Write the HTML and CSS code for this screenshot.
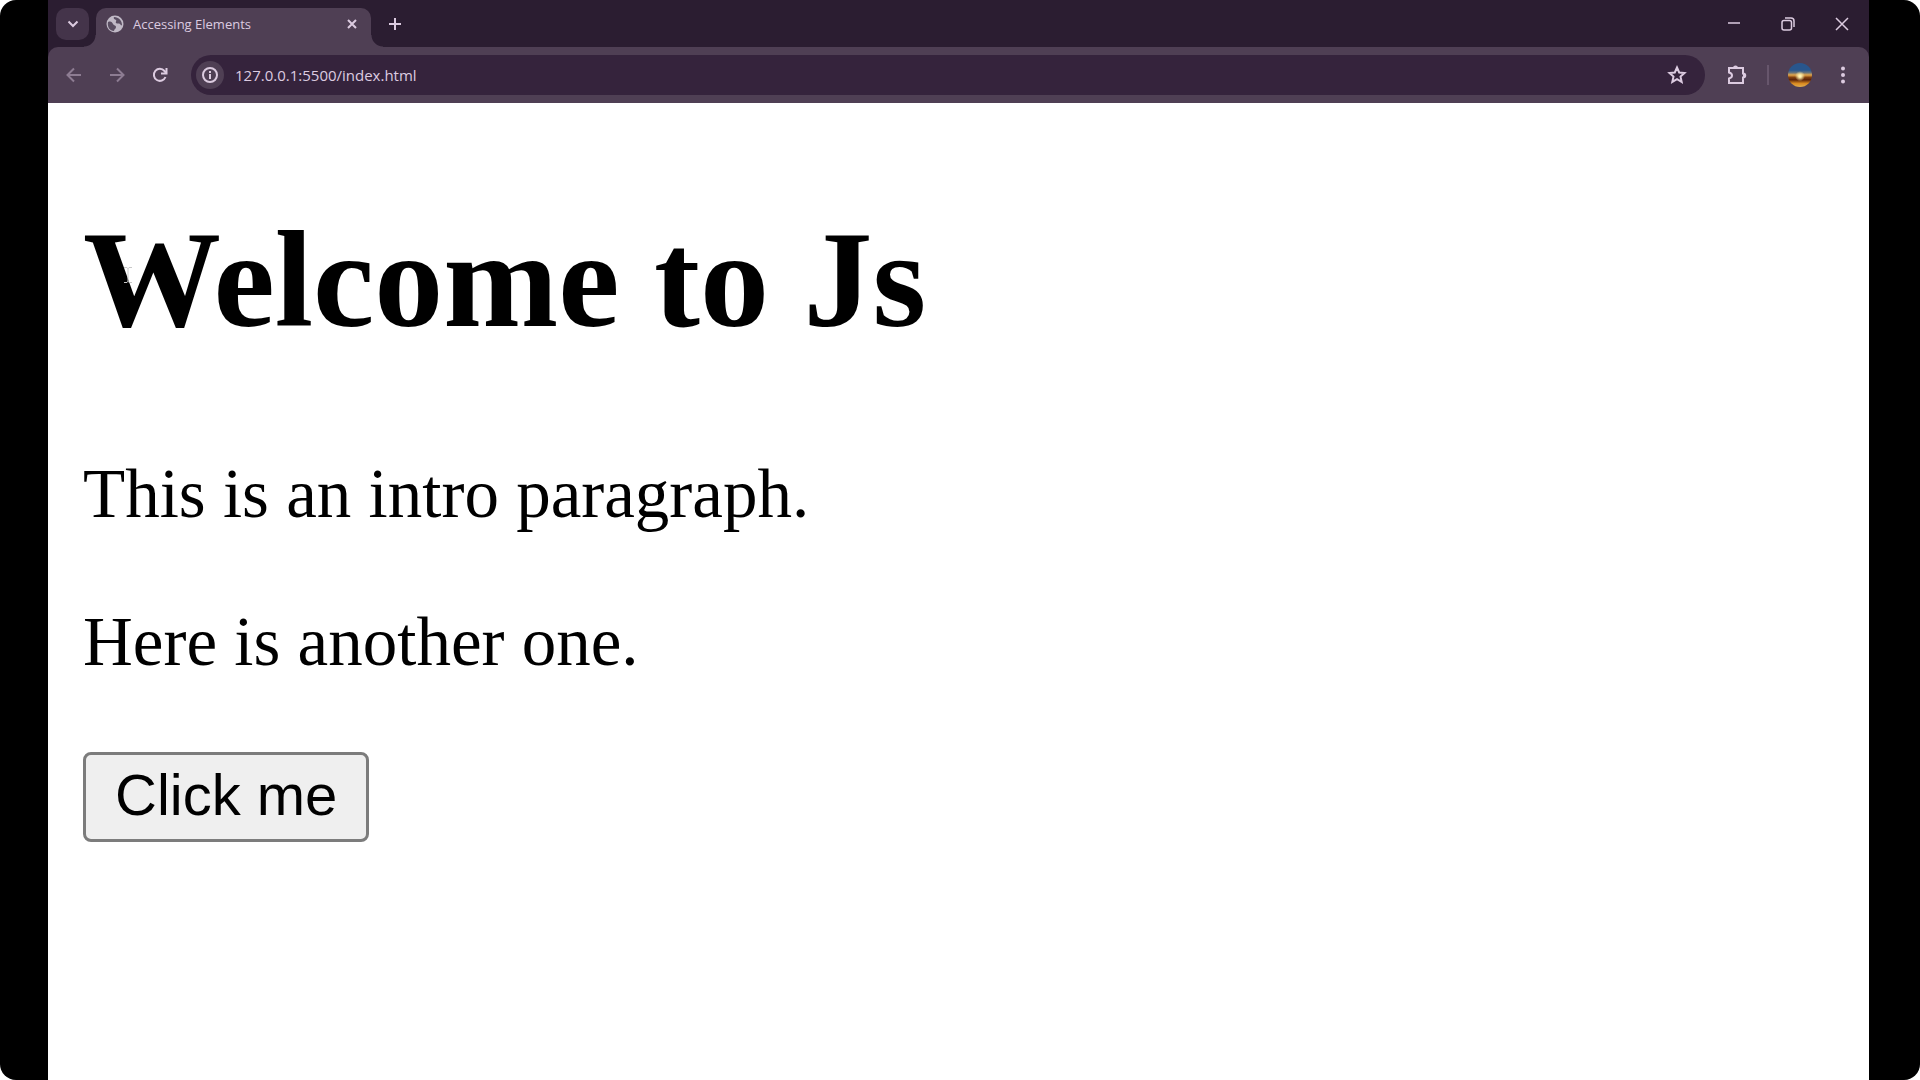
FILE: index.html
```html
<!DOCTYPE html>
<html lang="en">
<head>
	<meta charset="UTF-8">
	<meta name="viewport" content="width=device-width, initial-scale=1.0">
	<title>Accessing Elements</title>
	<link rel="stylesheet" href="styles.css">
</head>
<body>
	<div class="screen">
		<div class="window">
			<header>
				<div class="tabstrip">
					<button class="tab-search" aria-label="Search tabs">
						<svg width="12" height="8" viewBox="0 0 12 8"><path d="M1.5 1.5 6 6l4.5-4.5"/></svg>
					</button>
					<div class="tab">
						<svg class="globe" width="18" height="18" viewBox="0 0 18 18">
							<circle cx="9" cy="9" r="8.5"/>
							<path d="M2 7c3-1 4 0 5 2s3 1 3 3-2 2-2 4c-4 0-7-4-6-9zM8 2c-1 2 1 2 2 3s-1 2 0 3 3 0 4 1 1 2 2 1c0-4-3-8-8-8z"/>
						</svg>
						<span class="tab-title">Accessing Elements</span>
						<button class="tab-close" aria-label="Close tab">
							<svg width="10" height="10" viewBox="0 0 10 10"><path d="M1 1l8 8M9 1 1 9"/></svg>
						</button>
					</div>
					<button class="new-tab" aria-label="New tab">
						<svg width="14" height="14" viewBox="0 0 14 14"><path d="M7 1v12M1 7h12"/></svg>
					</button>
					<div class="controls">
						<button aria-label="Minimize">
							<svg width="14" height="14" viewBox="0 0 14 14"><path d="M1 6h12"/></svg>
						</button>
						<button aria-label="Restore">
							<svg width="14" height="14" viewBox="0 0 14 14"><rect x="1" y="3.5" width="9.5" height="9.5" rx="2"/><path d="M4 1h6a3 3 0 0 1 3 3v6"/></svg>
						</button>
						<button aria-label="Close">
							<svg width="14" height="14" viewBox="0 0 14 14"><path d="M1 1l12 12M13 1 1 13"/></svg>
						</button>
					</div>
				</div>
				<div class="toolbar">
					<button class="tool dim" aria-label="Back">
						<svg width="16" height="16" viewBox="0 0 16 16"><path d="M15 8H2M8 1.5 1.5 8 8 14.5"/></svg>
					</button>
					<button class="tool dim" aria-label="Forward">
						<svg width="16" height="16" viewBox="0 0 16 16"><path d="M1 8h13M8 1.5 14.5 8 8 14.5"/></svg>
					</button>
					<button class="tool" aria-label="Reload">
						<svg width="16" height="16" viewBox="0 0 16 16"><path d="M13.5 10A6 6 0 1 1 12.5 4L14.5 6.5"/><path d="M14.5 1v5.500H9"/></svg>
					</button>
					<div class="address">
						<button class="info" aria-label="View site information">
							<svg width="18" height="18" viewBox="0 0 18 18"><circle cx="9" cy="9" r="7"/><path d="M9 8v5M9 5v2"/></svg>
						</button>
						<input type="text" value="127.0.0.1:5500/index.html" aria-label="Address">
						<button class="star" aria-label="Bookmark">
							<svg width="20" height="20" viewBox="0 0 20 20"><path d="M10 2.5l2.2 5 5.3.5-4 3.6 1.2 5.3L10 14.1l-4.7 2.8 1.2-5.3-4-3.6 5.3-.5z"/></svg>
						</button>
					</div>
					<button class="tool" aria-label="Extensions">
						<svg width="22" height="22" viewBox="0 0 22 22"><path d="M3 4h14v5.5c3 0 3 4 0 4V19H3v-4.500c4-1 4-5 0-6z"/><path class="solid" d="M7 4a2.5 2.5 0 0 1 5 0zM17 9a2.5 2.5 0 0 1 0 5z"/></svg>
					</button>
					<span class="divider"></span>
					<button class="tool" aria-label="Profile"><span class="avatar"></span></button>
					<button class="tool" aria-label="Menu">
						<svg class="dots" width="6" height="18" viewBox="0 0 6 18"><circle cx="3" cy="2.5" r="2"/><circle cx="3" cy="9" r="2"/><circle cx="3" cy="15.5" r="2"/></svg>
					</button>
				</div>
			</header>
			<main>
				<h1>Welcome to Js</h1>
				<p>This is an intro paragraph.</p>
				<p>Here is another one.</p>
				<button class="click">Click me</button>
				<svg class="cursor" width="8" height="16" viewBox="0 0 8 16"><path d="M0 .5h3l1 1 1-1h3M4 1v14M0 15.5h3l1-1 1 1h3"/></svg>
			</main>
		</div>
	</div>
</body>
</html>
```

FILE: styles.css
```css
*{
	box-sizing: border-box;
}
body{
	margin: 0;
	background-color: #fff;
}
button{
	padding: 0;
	border: 0;
	background-color: transparent;
	color: inherit;
}
svg{
	display: block;
	fill: none;
	stroke: currentColor;
	stroke-width: 2;
}
.screen{
	display: flex;
	min-height: 100vh;
	padding: 0 51px 0 48px;
	background-color: #000;
	border-radius: 16px;
}
.window{
	flex: 1;
	background-color: #fff;
}
header{
	background-color: #2b1d31;
	color: #dccbe0;
	font-family: "Open Sans", "Noto Sans", sans-serif;
	font-weight: 500;
}
.tabstrip{
	display: flex;
	height: 47px;
	padding-left: 8px;
}
.tab-search{
	display: flex;
	align-items: center;
	justify-content: center;
	width: 33px;
	height: 32px;
	margin-top: 8px;
	border-radius: 10px;
	background-color: #44344a;
}
.tab{
	position: relative;
	display: flex;
	align-items: center;
	width: 275px;
	margin: 8px 0 0 7px;
	padding: 0 14px 7px 10px;
	border-radius: 10px 10px 0 0;
	background-color: #4f3f54;
}
/* curved feet of the active tab */
.tab::before,
.tab::after{
	content: "";
	position: absolute;
	bottom: 0;
	width: 12px;
	height: 12px;
}
.tab::before{
	right: 100%;
	background: radial-gradient(circle at 0 0, transparent 11px, #4f3f54 12px);
}
.tab::after{
	left: 100%;
	background: radial-gradient(circle at 100% 0, transparent 11px, #4f3f54 12px);
}
.globe circle{
	fill: #c0b9c6;
	stroke: none;
}
.globe path{
	fill: #5a4e62;
	stroke: none;
}
.tab-title{
	flex: 1;
	margin-left: 9px;
	font-size: 13px;
	line-height: 20px;
}
.new-tab{
	width: 48px;
	padding-left: 17px;
}
.controls{
	display: flex;
	margin-left: auto;
}
.controls button{
	display: flex;
	align-items: center;
	justify-content: center;
	width: 54px;
}
.controls svg{
	stroke-width: 1.5;
}
.toolbar{
	display: flex;
	align-items: center;
	height: 56px;
	padding: 0 5px 0 4px;
	border-radius: 10px 10px 0 0;
	background-color: #4f3f54;
}
.tool{
	display: flex;
	align-items: center;
	justify-content: center;
	width: 43px;
	height: 42px;
}
.dim{
	color: #8d7c92;
}
.address{
	flex: 1;
	display: flex;
	align-items: center;
	height: 40px;
	margin: 0 10px;
	padding: 0 18px 0 5px;
	border-radius: 20px;
	background-color: #35233c;
}
.info{
	display: flex;
	align-items: center;
	justify-content: center;
	width: 28px;
	height: 28px;
	border-radius: 50%;
	background-color: #4f3f54;
}
.address input{
	flex: 1;
	margin-left: 11px;
	padding: 0;
	border: 0;
	outline: 0;
	background-color: transparent;
	color: #dccbe0;
	font-family: inherit;
	font-size: 15px;
	font-weight: 500;
}
.divider{
	width: 2px;
	height: 20px;
	margin: 0 9px;
	background-color: #67566c;
}
.avatar{
	width: 24px;
	height: 24px;
	border-radius: 50%;
	background: radial-gradient(circle at 50% 55%, #fff3b0 1px, transparent 5px), linear-gradient(#28568d 30%, #66727b 40%, #e3a64a 50%, #81400f 60%, #5b2208 70%, #d98a20 85%, #e0ae50);
}
.dots{
	fill: currentColor;
	stroke: none;
}
.solid{
	fill: currentColor;
	stroke: none;
}
main{
	position: relative;
	padding: 98px 35px 0;
	color: #000;
	font-family: "Liberation Serif", "Times New Roman", serif;
}
h1{
	margin: 0 0 96px;
	font-size: 138px;
	line-height: 158px;
}
p{
	margin: 0 0 69px;
	font-size: 69px;
	line-height: 79px;
}
.click{
	height: 90px;
	margin-top: 1px;
	padding: 0 29px 4px;
	border: 3px solid #7c7c7c;
	border-radius: 8px;
	background-color: #efefef;
	font-family: "Liberation Sans", Arial, sans-serif;
	font-size: 58px;
	line-height: 80px;
}
/* text cursor resting over the heading */
.cursor{
	position: absolute;
	top: 164px;
	left: 76px;
	color: #c8c8c8;
	stroke-width: 1;
}
```
